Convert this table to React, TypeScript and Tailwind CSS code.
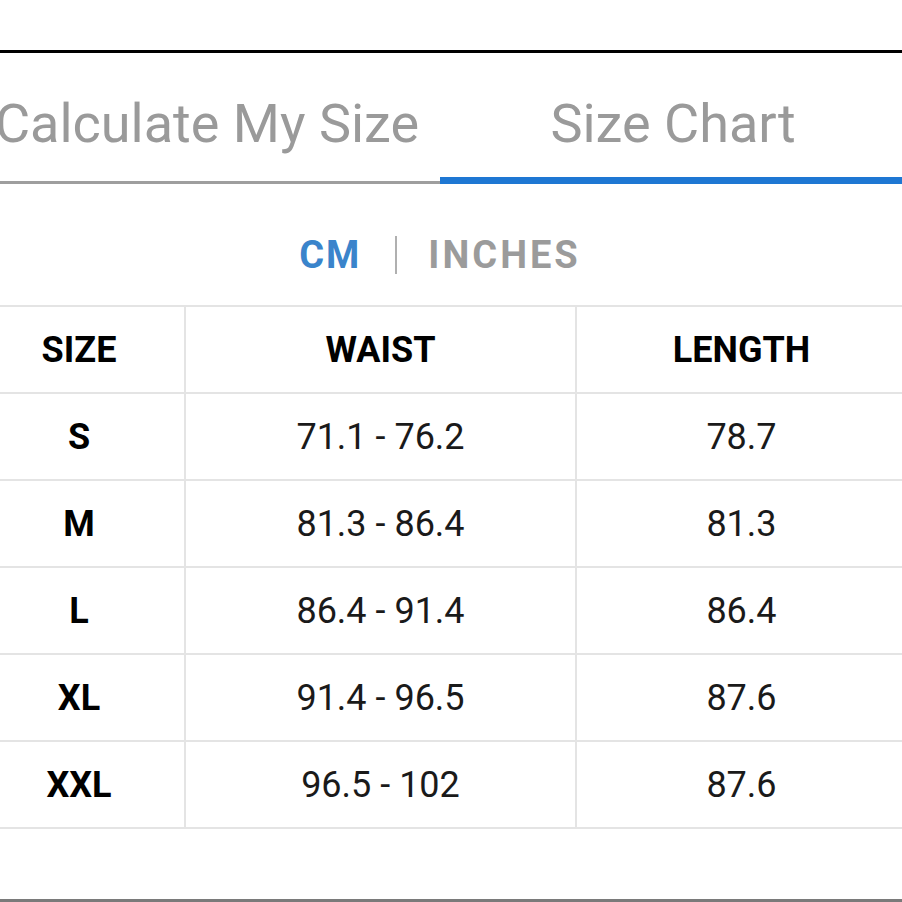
import React from "react";

const rows = [
  ["S", "71.1 - 76.2", "78.7"],
  ["M", "81.3 - 86.4", "81.3"],
  ["L", "86.4 - 91.4", "86.4"],
  ["XL", "91.4 - 96.5", "87.6"],
  ["XXL", "96.5 - 102", "87.6"],
];

export default function App() {
  return (
    <div className="w-[902px] h-[902px] overflow-hidden bg-white" style={{ fontFamily: "Roboto, 'Noto Sans', sans-serif" }}>
      <div className="ml-[-26px] w-[932px] pt-[50px]">
        <div className="border-t-[3px] border-black" />
        <div className="flex h-[131px]">
          <div className="w-[466px] border-b-[3px] border-[#9e9e9e] flex justify-center pt-[44px]">
            <span className="text-[54px] leading-[54px] text-[#9a9a9a] whitespace-nowrap">Calculate My Size</span>
          </div>
          <div className="w-[466px] border-b-[7px] border-[#1e77d3] flex justify-center pt-[44px]">
            <span className="text-[54px] leading-[54px] text-[#9a9a9a] whitespace-nowrap">Size Chart</span>
          </div>
        </div>
        <div className="flex justify-center pt-[52px] h-[121px] items-start">
          <div className="flex items-center h-[38px]">
            <span className="text-[38px] leading-[38px] font-bold tracking-[2px] text-[#3a84cb]">CM</span>
            <div className="w-[2px] h-[38px] bg-[#b0b0b0] ml-[34px] mr-[31px]" />
            <span className="text-[38px] leading-[38px] font-bold tracking-[3px] text-[#9b9b9b]">INCHES</span>
          </div>
        </div>
        <div className="border-t-2 border-[#e4e4e4] grid grid-cols-[212px_391px_329px]">
          {[["SIZE", "WAIST", "LENGTH"], ...rows].map((r, i) =>
            r.map((c, j) => (
              <div
                key={`${i}-${j}`}
                className={`h-[87px] border-b-2 border-[#e4e4e4] flex items-center justify-center text-[36px] leading-none ${
                  j < 2 ? "border-r-2" : ""
                } ${i === 0 || j === 0 ? "font-bold text-black" : "text-[#1a1a1a]"}`}
              >
                {c}
              </div>
            ))
          )}
        </div>
        <div className="mt-[70px] h-[4px] bg-[#7a7a7a]" />
      </div>
    </div>
  );
}
